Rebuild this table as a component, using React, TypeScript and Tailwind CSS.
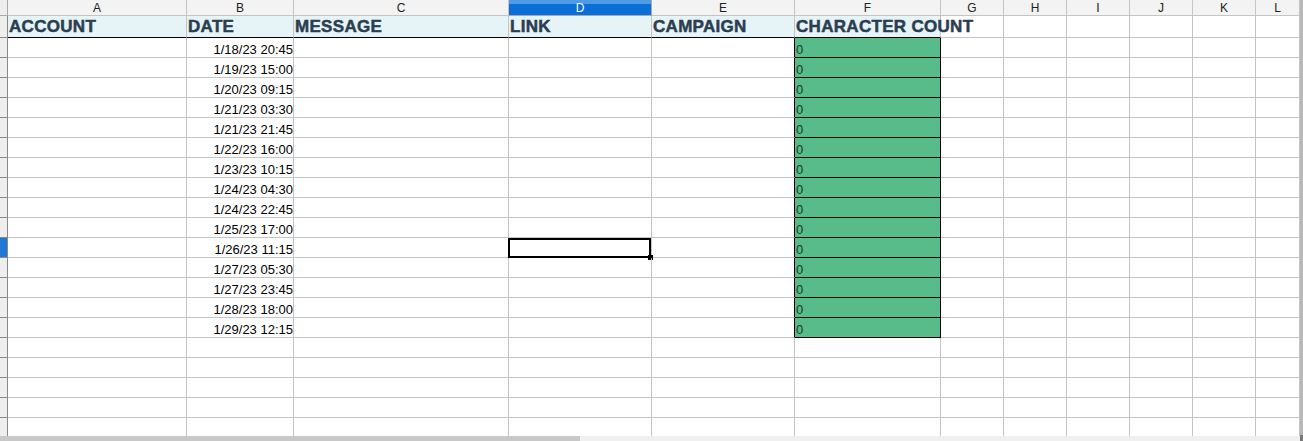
import React from "react";

const cols = ["A", "B", "C", "D", "E", "F", "G", "H", "I", "J", "K", "L"];

const headings = ["ACCOUNT", "DATE", "MESSAGE", "LINK", "CAMPAIGN", "CHARACTER COUNT"];

const dates = [
  "1/18/23 20:45",
  "1/19/23 15:00",
  "1/20/23 09:15",
  "1/21/23 03:30",
  "1/21/23 21:45",
  "1/22/23 16:00",
  "1/23/23 10:15",
  "1/24/23 04:30",
  "1/24/23 22:45",
  "1/25/23 17:00",
  "1/26/23 11:15",
  "1/27/23 05:30",
  "1/27/23 23:45",
  "1/28/23 18:00",
  "1/29/23 12:15",
];

const font = { fontFamily: '"Liberation Sans", Arial, sans-serif' };

// column widths include the right grid line
const grid =
  "grid grid-cols-[8px_179px_107px_215px_143px_143px_146px_63px_63px_63px_63px_63px_44px]";

const ColumnHeaders = () => (
  <div className={`${grid} h-[16px]`}>
    <div className="bg-[#eeeeee] border-r border-b border-[#a8a8a8]" />
    {cols.map((c) =>
      c === "D" ? (
        <div
          key={c}
          className="flex flex-col border-r border-b border-[#a8a8a8] bg-[#0a6fd6]"
        >
          <div className="h-[4px] bg-[#4d9be6]" />
          <div className="flex-1 flex items-center justify-center text-[12px] leading-none text-white -mt-[3px]">
            {c}
          </div>
        </div>
      ) : (
        <div
          key={c}
          className="flex items-center justify-center bg-[#f3f3f3] border-r border-b border-[#c4c4c4] text-[12px] leading-none text-[#222]"
        >
          {c}
        </div>
      )
    )}
  </div>
);

const HeadingRow = () => (
  <div className={`${grid} h-[22px]`}>
    <div className="bg-[#eeeeee] border-r border-b border-[#8a8a8a]" />
    {cols.map((c, i) => {
      const h = headings[i];
      if (h) {
        return (
          <div
            key={c}
            className="relative flex items-end bg-[#e6f4f7] border-r border-b border-r-[#c4c4c4] border-b-black pl-[1px] pb-[1px]"
          >
            <span
              className="whitespace-nowrap text-[17px] font-black text-[#2b3e50] tracking-[0.3px] [-webkit-text-stroke:0.5px_#2b3e50]"
              style={{ fontFamily: '"Liberation Sans", Arial, sans-serif', lineHeight: "19px" }}
            >
              {h}
            </span>
          </div>
        );
      }
      return <div key={c} className="border-r border-b border-[#c4c4c4]" />;
    })}
  </div>
);

const DataRow = ({ row }: { row: number }) => {
  const date = dates[row - 2];
  const green = row >= 2 && row <= 16;
  const selectedRow = row === 12;
  return (
    <div className={`${grid} h-[20px]`}>
      <div
        className={`border-r border-b border-[#8a8a8a] ${
          selectedRow ? "bg-[#1e78d6]" : "bg-[#eeeeee]"
        }`}
      />
      {cols.map((c) => {
        if (c === "B") {
          return (
            <div
              key={c}
              className="flex items-end justify-end border-r border-b border-[#c4c4c4]"
            >
              <span className="text-[13px] leading-[15px] text-black whitespace-nowrap">
                {date}
              </span>
            </div>
          );
        }
        if (c === "D") {
          return (
            <div key={c} className="relative border-r border-b border-[#c4c4c4]">
              {selectedRow && (
                <>
                  <div className="absolute -left-[1px] top-0 right-0 -bottom-[1px] border-2 border-black" />
                  <div className="absolute -right-[2px] -bottom-[3px] w-[5px] h-[5px] bg-black" />
                </>
              )}
            </div>
          );
        }
        if (c === "E") {
          return (
            <div
              key={c}
              className={`border-r border-b border-b-[#c4c4c4] ${
                green ? "border-r-black" : "border-r-[#c4c4c4]"
              }`}
            />
          );
        }
        if (c === "F") {
          return green ? (
            <div
              key={c}
              className="flex items-end bg-[#57bb8a] border-r border-b border-black pl-[1px]"
            >
              <span className="text-[13px] leading-[15px] text-[#173d27]">0</span>
            </div>
          ) : (
            <div key={c} className="border-r border-b border-[#c4c4c4]" />
          );
        }
        return <div key={c} className="border-r border-b border-[#c4c4c4]" />;
      })}
    </div>
  );
};

export default function App() {
  const rows = Array.from({ length: 20 }, (_, i) => i + 2);
  return (
    <div className="w-[1303px] h-[441px] bg-white overflow-hidden flex" style={font}>
      <div className="w-[1300px] flex flex-col">
        <div className="flex-1 overflow-hidden">
          <ColumnHeaders />
          <HeadingRow />
          {rows.map((r) => (
            <DataRow key={r} row={r} />
          ))}
        </div>
        <div className="h-[5px] flex">
          <div className="w-[580px] bg-[#c8c8c8]" />
          <div className="flex-1 bg-[#f0f0f0]" />
        </div>
      </div>
      <div className="w-[3px] flex flex-col bg-[#b8b8b8]">
        <div className="flex-1" />
        <div className="h-[6px] bg-[#777]" />
      </div>
    </div>
  );
}
